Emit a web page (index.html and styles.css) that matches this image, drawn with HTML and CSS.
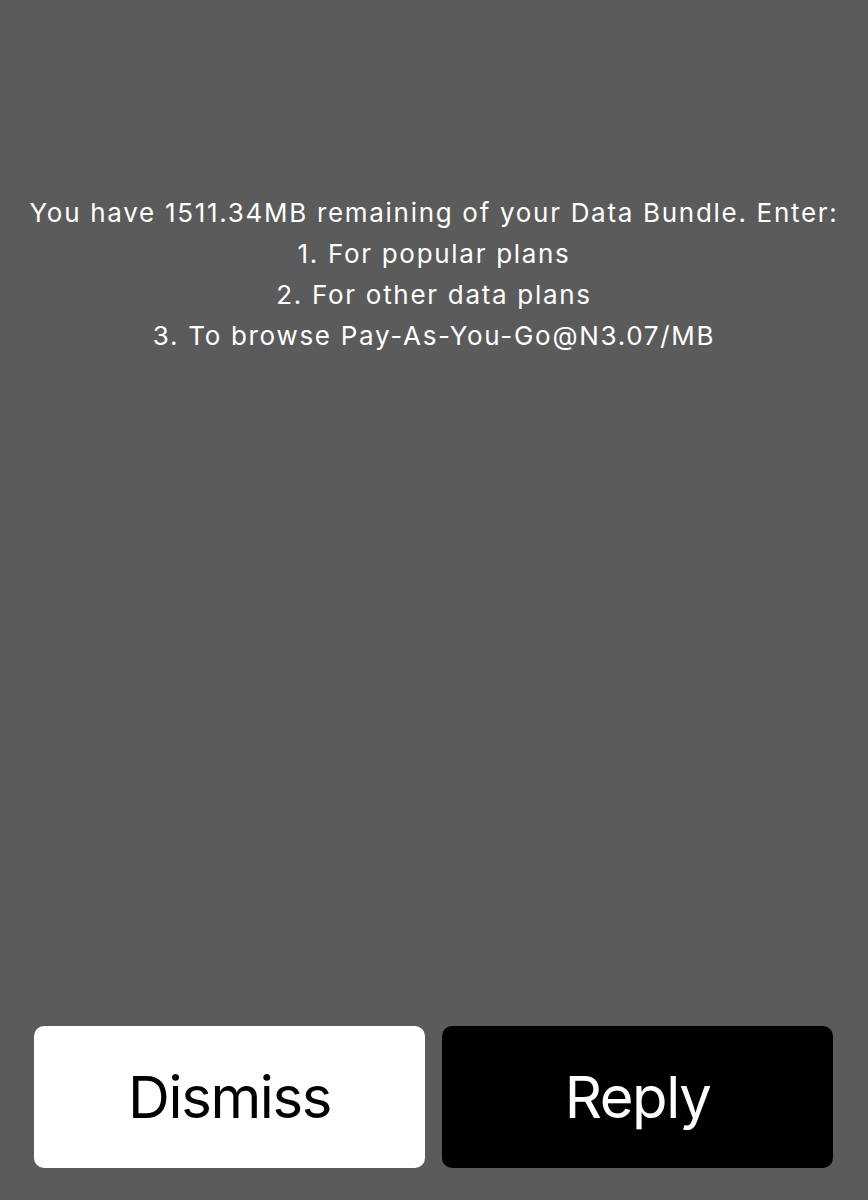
FILE: index.html
```html
<!DOCTYPE html>
<html lang="en">
<head>
    <meta charset="UTF-8">
    <meta name="viewport" content="width=device-width, initial-scale=1.0">
    <title>USSD Message</title>
    <link rel="stylesheet" href="styles.css">
</head>
<body>
    <div class="screen">
        <div class="message">
            You have 1511.34MB remaining of your Data Bundle. Enter:<br>
            1. For popular plans<br>
            2. For other data plans<br>
            3. To browse Pay-As-You-Go@N3.07/MB
        </div>

        <div class="actions">
            <button class="btn btn-dismiss">Dismiss</button>
            <button class="btn btn-reply">Reply</button>
        </div>
    </div>
</body>
</html>
```

FILE: styles.css
```css
html, body {
    margin: 0;
    height: 100%;
}

body {
    background-color: #5b5b5b;
    font-family: Inter, 'Noto Sans', sans-serif;
    color: #fff;
}

.screen {
    display: flex;
    flex-direction: column;
    height: 100vh;
    box-sizing: border-box;
    padding: 192px 0 32px;
}

.message {
    text-align: center;
    font-size: 26px;
    line-height: 41px;
    letter-spacing: 1.7px;
}

.actions {
    margin-top: auto;
    display: flex;
    gap: 17px;
    padding: 0 35px 0 34px;
}

.btn {
    flex: 1;
    height: 142px;
    border: none;
    border-radius: 10px;
    font-family: Inter, 'Noto Sans', sans-serif;
    font-size: 58px;
    letter-spacing: -1.4px;
    cursor: pointer;
}

.btn-dismiss {
    background-color: #fff;
    color: #000;
}

.btn-reply {
    background-color: #000;
    color: #fff;
}
```
